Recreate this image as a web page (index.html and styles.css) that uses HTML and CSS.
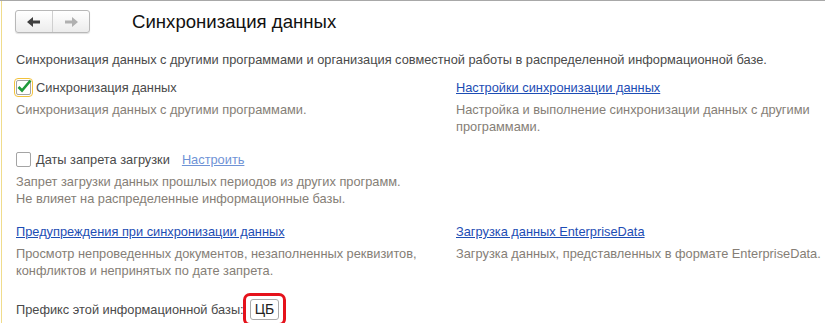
FILE: index.html
```html
<!DOCTYPE html>
<html lang="ru">
<head>
    <meta charset="UTF-8">
    <title>Синхронизация данных</title>
    <link rel="stylesheet" href="styles.css">
</head>
<body>
    <div class="page">
        <div class="panel">
            <div class="header">
                <div class="nav">
                    <span class="nav-btn">
                        <svg width="14" height="10" viewBox="0 0 14 10"><path d="M0 5 L6 0 L6 3.5 L13 3.5 L13 6.5 L6 6.5 L6 10 Z" fill="#3f3f3f"/></svg>
                    </span>
                    <span class="nav-btn">
                        <svg width="14" height="10" viewBox="0 0 14 10"><path d="M14 5 L8 0 L8 3.5 L1 3.5 L1 6.5 L8 6.5 L8 10 Z" fill="#b0b0b0"/></svg>
                    </span>
                </div>
                <h1 class="title">Синхронизация данных</h1>
            </div>

            <p class="intro">Синхронизация данных с другими программами и организация совместной работы в распределенной информационной базе.</p>

            <div class="grid">
                <div class="cell">
                    <div class="line">
                        <span class="check focused">
                            <svg width="17" height="15" viewBox="0 0 17 15"><path d="M2.5 8 L6 11.5 L14.5 1.5" fill="none" stroke="#1f9a3a" stroke-width="2.6"/></svg>
                        </span>
                        <span class="label">Синхронизация данных</span>
                    </div>
                    <p class="note">Синхронизация данных с другими программами.</p>
                </div>
                <div class="cell">
                    <div class="line"><a class="link" href="#">Настройки синхронизации данных</a></div>
                    <p class="note">Настройка и выполнение синхронизации данных с другими программами.</p>
                </div>

                <div class="cell">
                    <div class="line">
                        <span class="check"></span>
                        <span class="label">Даты запрета загрузки</span>
                        <a class="link light" href="#">Настроить</a>
                    </div>
                    <p class="note">Запрет загрузки данных прошлых периодов из других программ.<br>Не влияет на распределенные информационные базы.</p>
                </div>
                <div class="cell"></div>

                <div class="cell">
                    <div class="line"><a class="link" href="#">Предупреждения при синхронизации данных</a></div>
                    <p class="note">Просмотр непроведенных документов, незаполненных реквизитов, конфликтов и непринятых по дате запрета.</p>
                </div>
                <div class="cell">
                    <div class="line"><a class="link" href="#">Загрузка данных EnterpriseData</a></div>
                    <p class="note">Загрузка данных, представленных в формате EnterpriseData.</p>
                </div>
            </div>

            <div class="prefix">
                <span class="label">Префикс этой информационной базы:</span>
                <span class="marker"><span class="field">ЦБ</span></span>
            </div>
        </div>
    </div>
</body>
</html>
```

FILE: styles.css
```css
body {
    margin: 0;
    background: #fff;
    font-family: "Liberation Sans", Arial, sans-serif;
    font-size: 12.8px;
    line-height: 17px;
    color: #4a4a4a;
}
.page {
    width: 825px;
    border-top: 1px solid #a8a8a8;
}
.panel {
    margin-left: 1px;
    border-left: 1px solid #f0dc8c;
    height: 322px;
    padding-left: 13px;
}
.header {
    display: flex;
    align-items: center;
    padding-top: 9px;
}
.nav {
    display: flex;
    height: 21px;
    border: 1px solid #b8b8b8;
    border-radius: 3px;
    background: linear-gradient(#ffffff, #ececec);
    box-shadow: 0 1px 1px rgba(0,0,0,0.12);
}
.nav-btn {
    width: 36px;
    display: flex;
    align-items: center;
    justify-content: center;
}
.nav-btn + .nav-btn {
    border-left: 1px solid #cfcfcf;
}
.title {
    margin: 0 0 0 42px;
    font-size: 18.6px;
    font-weight: normal;
    line-height: 23px;
    color: #111;
}
.intro {
    margin: 18px 0 0 1px;
}
.grid {
    display: grid;
    grid-template-columns: 440px 1fr;
    row-gap: 16px;
    margin-top: 11px;
    margin-left: 1px;
}
.line {
    display: flex;
    align-items: center;
    height: 17px;
}
.check {
    width: 13px;
    height: 13px;
    border: 1px solid #a4a4a4;
    border-radius: 2px;
    background: #fff;
    margin-right: 5px;
    position: relative;
}
.check.focused {
    outline: 1px solid #f2c23c;
    outline-offset: 1px;
}
.check svg {
    position: absolute;
    left: -1px;
    top: -2px;
}
.label {
    color: #4a4a4a;
}
.link {
    color: #1d4db4;
    text-decoration: underline;
}
.link.light {
    color: #6f93d6;
    margin-left: 12px;
}
.note {
    margin: 5px 0 0;
    color: #857e76;
}
.prefix {
    display: flex;
    align-items: center;
    margin-top: 14px;
    margin-left: 1px;
}
.marker {
    margin-left: -1px;
    border: 3px solid #e5121b;
    border-radius: 7px;
    padding: 3px 4px;
}
.field {
    display: block;
    width: 19px;
    height: 19px;
    line-height: 19px;
    padding: 0 4px;
    border: 1px solid #aaa;
    border-radius: 3px;
    color: #222;
    font-size: 14px;
}
```
